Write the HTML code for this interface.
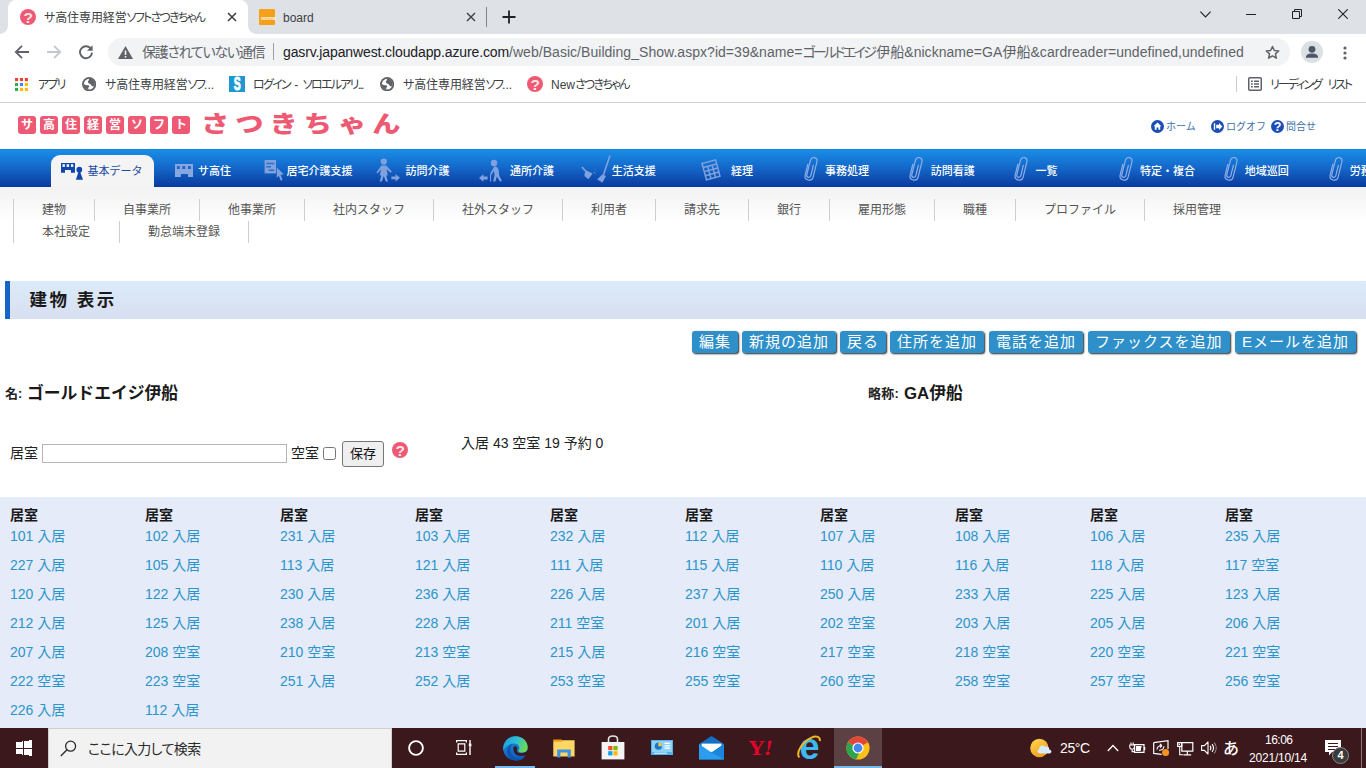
<!DOCTYPE html>
<html lang="ja">
<head>
<meta charset="utf-8">
<title>サ高住専用経営ソフトさつきちゃん</title>
<style>
*{box-sizing:border-box;}
html,body{margin:0;padding:0;}
body{width:1366px;height:768px;overflow:hidden;position:relative;background:#fff;
  font-family:"Liberation Sans","Noto Sans CJK JP",sans-serif;color:#222;}
.abs{position:absolute;white-space:nowrap;}
svg{display:block;}

/* ===== Chrome: tab strip ===== */
#tabstrip{position:absolute;left:0;top:0;width:1366px;height:34px;background:#dee1e6;}
#tab1{position:absolute;left:8px;top:0;width:240px;height:34px;background:#fff;border-radius:8px 8px 0 0;}
#tab1:before,#tab1:after{content:"";position:absolute;bottom:0;width:8px;height:8px;}
#tab1:before{left:-8px;background:radial-gradient(circle at 0 0,transparent 7.5px,#fff 8px);}
#tab1:after{right:-8px;background:radial-gradient(circle at 100% 0,transparent 7.5px,#fff 8px);}
.tabtxt{position:absolute;top:9.5px;font-size:12px;line-height:16px;color:#3c4043;white-space:nowrap;}

/* ===== Chrome: toolbar ===== */
#toolbar{position:absolute;left:0;top:34px;width:1366px;height:34px;background:#fff;}
#omni{position:absolute;left:108px;top:4px;width:1182px;height:28px;border-radius:14px;background:#f1f3f4;}
#url{position:absolute;left:283px;top:9px;font-size:14px;line-height:18px;color:#5f6368;white-space:nowrap;letter-spacing:0.04px;}
#url b{font-weight:normal;color:#202124;letter-spacing:-0.12px;}

/* ===== Chrome: bookmarks ===== */
#bm{position:absolute;left:0;top:68px;width:1366px;height:35px;background:#fff;border-bottom:1px solid #d0d2d5;}
.bmt{position:absolute;top:9.4px;font-size:12px;line-height:16px;color:#3c4043;white-space:nowrap;}

.kj{font-feature-settings:"palt";letter-spacing:-0.1px;}
.kn{font-feature-settings:"palt";letter-spacing:-1.75px;}
#sec{left:142px;top:9px;font-size:14px;line-height:18px;color:#5f6368;font-feature-settings:"palt";letter-spacing:-1.3px;}
.un{font-feature-settings:"palt";letter-spacing:-2.7px;margin-right:2px;}
/* ===== Page ===== */

#page{position:absolute;left:0;top:0;width:1366px;height:728px;background:#fff;overflow:hidden;z-index:0;}
#tabstrip,#toolbar,#bm,#taskbar{z-index:2;}
.lb{position:absolute;top:116px;width:18px;height:18px;border-radius:3px;background:#ee5a73;color:#fff;font-weight:bold;font-size:12px;line-height:18px;text-align:center;}
#logot{position:absolute;left:201px;top:105.5px;font-size:25px;line-height:36px;font-weight:900;color:#ee5a73;letter-spacing:5.3px;white-space:nowrap;transform:scale(1.13,0.93);transform-origin:0 50%;}
.hl{position:absolute;top:120px;font-size:10px;line-height:13px;color:#3d6fa8;white-space:nowrap;}
#nav{position:absolute;left:0;top:149px;width:1366px;height:38px;background:linear-gradient(#0f86e2 0px,#198ce5 1.5px,#1469cb 18px,#0d45a9 33px,#0b3fa5 36px,#0836a0 38px);}
#navtab{position:absolute;left:51px;top:6px;width:103px;height:32px;background:#f4f4f4;border-radius:9px 9px 0 0;}
.nt{position:absolute;top:15px;font-size:11px;line-height:14px;font-weight:500;color:#fff;white-space:nowrap;letter-spacing:0px;}
.nt.act{color:#1b4aa3;font-weight:normal;}
#sub{position:absolute;left:0;top:187px;width:1366px;height:58px;background:linear-gradient(#f2f2f2 0px,#ffffff 34px);}
.si{position:absolute;height:22px;border-left:1px solid #cfcfcf;padding-left:28px;font-size:12px;line-height:22px;color:#555;white-space:nowrap;}
#ttl{position:absolute;left:5px;top:281px;width:1361px;height:38px;border-left:5px solid #1565c8;background:linear-gradient(#dbebf9,#d8dff0);}
#ttl span{position:absolute;left:19.5px;top:6px;font-size:17.5px;line-height:26px;font-weight:bold;color:#1a1a1a;letter-spacing:2.5px;white-space:nowrap;}
.btn{position:absolute;top:331px;height:22px;background:#2f90c9;color:#fff;border-radius:3px;box-shadow:1px 1px 2px #222;font-size:15px;line-height:21px;letter-spacing:1px;padding:0 7px 0 7px;white-space:nowrap;}
.lbl{position:absolute;font-size:13px;font-weight:bold;color:#222;white-space:nowrap;line-height:20px;}
.val{position:absolute;font-size:16.8px;font-weight:bold;color:#1a1a1a;white-space:nowrap;line-height:24px;}
.t14{position:absolute;font-size:14px;line-height:20px;color:#222;white-space:nowrap;}
#grid{position:absolute;left:0;top:497px;width:1366px;height:231px;background:#e5ebf8;}
.gh{position:absolute;top:8px;font-size:14px;line-height:20px;font-weight:bold;color:#1a1a1a;white-space:nowrap;}
.gc{position:absolute;font-size:14px;line-height:20px;color:#2b95cb;white-space:nowrap;}


/* ===== Taskbar ===== */
#taskbar{position:absolute;left:0;top:728px;width:1366px;height:40px;background:#3a181b;}
#srch{font-feature-settings:"palt";letter-spacing:-0.6px;}
</style>
</head>
<body>

<div id="tabstrip">
  <div id="tab1"></div>
  <svg class="abs" style="left:20px;top:9px" width="16" height="16" viewBox="0 0 16 16"><circle cx="8" cy="8" r="8" fill="#ee5a73"/><text x="8.3" y="13.5" font-size="15.5" font-weight="bold" font-family="Liberation Sans,sans-serif" fill="#fce4e9" text-anchor="middle">?</text></svg>
  <span class="tabtxt" style="left:44px"><span class="kj">サ高住専用経営</span><span class="kn" style="letter-spacing:-1.75px">ソフトさつきちゃん</span></span>
  <svg class="abs" style="left:226px;top:11px" width="12" height="12" viewBox="0 0 12 12"><path d="M2 2 L10 10 M10 2 L2 10" stroke="#3c4043" stroke-width="1.6" fill="none"/></svg>
  <div class="abs" style="left:259px;top:9px;width:16px;height:16px;background:#f6a01a;border-radius:1px"></div>
  <span class="abs" style="left:261px;top:15px;font-size:5px;line-height:6px;color:#fff;font-weight:bold;letter-spacing:-0.2px">norma</span>
  <span class="tabtxt" style="left:283px">board</span>
  <svg class="abs" style="left:465px;top:11px" width="12" height="12" viewBox="0 0 12 12"><path d="M2 2 L10 10 M10 2 L2 10" stroke="#3c4043" stroke-width="1.4" fill="none"/></svg>
  <div class="abs" style="left:486px;top:7px;width:1px;height:20px;background:#80868b"></div>
  <svg class="abs" style="left:501px;top:9px" width="16" height="16" viewBox="0 0 16 16"><path d="M8 1.5 V14.5 M1.5 8 H14.5" stroke="#202124" stroke-width="1.8" fill="none"/></svg>
  <svg class="abs" style="left:1199.5px;top:10.8px" width="11" height="7" viewBox="0 0 11 7"><path d="M0.4 0.6 L5.5 6 L10.6 0.6" stroke="#202124" stroke-width="1.1" fill="none"/></svg>
  <div class="abs" style="left:1246px;top:14px;width:10px;height:1px;background:#202124"></div>
  <svg class="abs" style="left:1292px;top:9px" width="10" height="10" viewBox="0 0 10 10"><path d="M0.5 2.5 H7.5 V9.5 H0.5 Z M2.5 2.5 V0.5 H9.5 V7.5 H7.5" stroke="#202124" stroke-width="1" fill="none"/></svg>
  <svg class="abs" style="left:1338px;top:9px" width="10" height="10" viewBox="0 0 10 10"><path d="M0.3 0.3 L9.7 9.7 M9.7 0.3 L0.3 9.7" stroke="#202124" stroke-width="1.1" fill="none"/></svg>
</div>

<div id="toolbar">
  <svg class="abs" style="left:14px;top:10px" width="16" height="16" viewBox="0 0 16 16"><path d="M15 8 H2 M8 1.8 L1.8 8 L8 14.2" stroke="#5f6368" stroke-width="1.8" fill="none"/></svg>
  <svg class="abs" style="left:46px;top:10px" width="16" height="16" viewBox="0 0 16 16"><path d="M1 8 H14 M8 1.8 L14.2 8 L8 14.2" stroke="#c4c7ca" stroke-width="1.8" fill="none"/></svg>
  <svg class="abs" style="left:78px;top:10px" width="16" height="16" viewBox="0 0 16 16"><path d="M13.2 5.2 A6 6 0 1 0 14 8.6" stroke="#5f6368" stroke-width="1.9" fill="none"/><path d="M14.6 1.2 V6.8 H9 Z" fill="#5f6368"/></svg>
  <div id="omni"></div>
  <svg class="abs" style="left:118px;top:11.5px" width="15" height="13" viewBox="0 0 15 13"><path d="M7.5 0 L15 13 H0 Z" fill="#5f6368"/><rect x="6.7" y="4.5" width="1.6" height="4.5" fill="#f1f3f4"/><rect x="6.7" y="10" width="1.6" height="1.6" fill="#f1f3f4"/></svg>
  <span class="abs" id="sec">保護されていない通信</span>
  <div class="abs" style="left:273px;top:9px;width:1px;height:17px;background:#9aa0a6"></div>
  <span id="url"><b>gasrv.japanwest.cloudapp.azure.com</b>/web/Basic/Building_Show.aspx?id=39&amp;name=<span class="un">ゴールドエイジ</span>伊船&amp;nickname=GA伊船&amp;cardreader=undefined,undefined</span>
  <svg class="abs" style="left:1264.5px;top:10.5px" width="15" height="14.2" viewBox="0 0 17 16"><path d="M8.5 1.6 L10.6 6.2 L15.6 6.7 L11.8 10 L12.9 14.9 L8.5 12.3 L4.1 14.9 L5.2 10 L1.4 6.7 L6.4 6.2 Z" stroke="#5f6368" stroke-width="1.7" fill="none" stroke-linejoin="round"/></svg>
  <svg class="abs" style="left:1301px;top:7px" width="22" height="22" viewBox="0 0 22 22"><circle cx="11" cy="11" r="11" fill="#dcdfe4"/><circle cx="11" cy="8.3" r="3.4" fill="#4d5668"/><path d="M4.9 16.8 C4.9 13 8.4 12.5 11 12.5 C13.6 12.5 17.1 13 17.1 16.8 Z" fill="#4d5668"/></svg>
  <svg class="abs" style="left:1342.5px;top:11.6px" width="4" height="14" viewBox="0 0 4 14"><circle cx="2" cy="2" r="1.6" fill="#5f6368"/><circle cx="2" cy="7" r="1.6" fill="#5f6368"/><circle cx="2" cy="12" r="1.6" fill="#5f6368"/></svg>
</div>

<div id="bm">
  <svg class="abs" style="left:15px;top:9.5px" width="13" height="13" viewBox="0 0 14 14"><rect x="0" y="0" width="3.4" height="3.4" fill="#ea4335"/><rect x="5.3" y="0" width="3.4" height="3.4" fill="#ea4335"/><rect x="10.6" y="0" width="3.4" height="3.4" fill="#ea4335"/><rect x="0" y="5.3" width="3.4" height="3.4" fill="#34a853"/><rect x="5.3" y="5.3" width="3.4" height="3.4" fill="#4285f4"/><rect x="10.6" y="5.3" width="3.4" height="3.4" fill="#fbbc05"/><rect x="0" y="10.6" width="3.4" height="3.4" fill="#34a853"/><rect x="5.3" y="10.6" width="3.4" height="3.4" fill="#fbbc05"/><rect x="10.6" y="10.6" width="3.4" height="3.4" fill="#fbbc05"/></svg>
  <span class="bmt" id="bm0" style="left:38px"><span class="kn">アプリ</span></span>
  <svg class="abs" style="left:82px;top:8.8px" width="14.3" height="14.3" viewBox="0 0 14.3 14.3"><circle cx="7.15" cy="7.15" r="7.1" fill="#5f6368"/><circle cx="7.15" cy="7.15" r="5.3" fill="#fff"/><path d="M6.6 1.6 A5.6 5.6 0 0 1 12.7 7.8 C12.2 9.4 11 9.8 10 9 C9.2 8.4 9.4 7.4 8.2 7 C6.6 6.6 5.6 5.8 6 4.6 C6.4 3.6 7.6 3.4 6.6 1.6 Z M1.6 6.9 A5.6 5.6 0 0 0 7.4 12.7 C5.8 11.6 6 10.6 7 10 C7.8 9.4 7 8.4 5.8 8.2 C4.4 8 3 7.8 1.6 6.9 Z" fill="#5f6368"/></svg>
  <span class="bmt" id="bm1" style="left:105px"><span class="kj">サ高住専用経営</span><span class="kn">ソフ</span>...</span>
  <svg class="abs" style="left:229px;top:8px" width="16" height="16" viewBox="0 0 16 16"><rect width="16" height="16" fill="#1e98d2"/><text transform="translate(8.2 14.4) scale(0.58 1)" x="0" y="0" font-size="18" font-weight="bold" font-family="Liberation Sans,sans-serif" fill="#fff" stroke="#fff" stroke-width="0.9" text-anchor="middle">S</text></svg>
  <span class="bmt" id="bm2" style="left:253px;word-spacing:1.2px"><span class="kn">ログイン</span> - <span class="kn">ソロエルアリ...</span></span>
  <svg class="abs" style="left:380px;top:8.8px" width="14.3" height="14.3" viewBox="0 0 14.3 14.3"><circle cx="7.15" cy="7.15" r="7.1" fill="#5f6368"/><circle cx="7.15" cy="7.15" r="5.3" fill="#fff"/><path d="M6.6 1.6 A5.6 5.6 0 0 1 12.7 7.8 C12.2 9.4 11 9.8 10 9 C9.2 8.4 9.4 7.4 8.2 7 C6.6 6.6 5.6 5.8 6 4.6 C6.4 3.6 7.6 3.4 6.6 1.6 Z M1.6 6.9 A5.6 5.6 0 0 0 7.4 12.7 C5.8 11.6 6 10.6 7 10 C7.8 9.4 7 8.4 5.8 8.2 C4.4 8 3 7.8 1.6 6.9 Z" fill="#5f6368"/></svg>
  <span class="bmt" id="bm3" style="left:403px"><span class="kj">サ高住専用経営</span><span class="kn">ソフ</span>...</span>
  <svg class="abs" style="left:527px;top:8px" width="16" height="16" viewBox="0 0 16 16"><circle cx="8" cy="8" r="8" fill="#ee5a73"/><text x="8.3" y="13.5" font-size="15.5" font-weight="bold" font-family="Liberation Sans,sans-serif" fill="#fce4e9" text-anchor="middle">?</text></svg>
  <span class="bmt" id="bm4" style="left:551px">New<span class="kn">さつきちゃん</span></span>
  <div class="abs" style="left:1236px;top:8px;width:1px;height:16px;background:#c8cacd"></div>
  <svg class="abs" style="left:1248px;top:9px" width="14" height="14" viewBox="0 0 14 14"><rect x="0.75" y="0.75" width="12.5" height="12.5" rx="1" fill="none" stroke="#5f6368" stroke-width="1.5"/><path d="M3 4.2 H4.8 M6 4.2 H11 M3 7 H4.8 M6 7 H11 M3 9.8 H4.8 M6 9.8 H11" stroke="#5f6368" stroke-width="1.4"/></svg>
  <span class="bmt" id="bm5" style="left:1270px"><span class="kn" style="letter-spacing:-2px">リーディング</span> &nbsp;<span class="kn" style="letter-spacing:-2.2px">リスト</span></span>
</div>

<div id="page">
  <span class="lb" style="left:18px">サ</span>
  <span class="lb" style="left:40px">高</span>
  <span class="lb" style="left:62px">住</span>
  <span class="lb" style="left:84px">経</span>
  <span class="lb" style="left:106px">営</span>
  <span class="lb" style="left:128px">ソ</span>
  <span class="lb" style="left:150px">フ</span>
  <span class="lb" style="left:172px">ト</span>
  <span id="logot">さつきちゃん</span>
  <svg class="abs" style="left:1151px;top:120px" width="13" height="13" viewBox="0 0 13 13"><circle cx="6.5" cy="6.5" r="6.5" fill="#1a4db5"/><path d="M6.5 2.6 L10.4 6.3 H9.2 V9.8 H7.4 V7.4 H5.6 V9.8 H3.8 V6.3 H2.6 Z" fill="#fff"/></svg>
  <span class="hl" style="left:1166px">ホーム</span>
  <svg class="abs" style="left:1211px;top:120px" width="13" height="13" viewBox="0 0 13 13"><circle cx="6.5" cy="6.5" r="6.5" fill="#1a4db5"/><path d="M2.8 3.2 H4.2 V9.8 H2.8 Z M5.2 4.8 H8 V3 L11.4 6.5 L8 10 V8.2 H5.2 Z" fill="#fff"/></svg>
  <span class="hl" style="left:1226px">ログオフ</span>
  <svg class="abs" style="left:1271px;top:120px" width="13" height="13" viewBox="0 0 13 13"><circle cx="6.5" cy="6.5" r="6.5" fill="#1a4db5"/><text x="6.6" y="11" font-size="12.5" font-weight="bold" font-family="Liberation Sans,sans-serif" fill="#fff" text-anchor="middle">?</text></svg>
  <span class="hl" style="left:1286px">問合せ</span>
  <div id="nav">
    <div id="navtab"></div>
    <span class="nt act" style="left:87.6px">基本データ</span>
    <span class="nt" style="left:198px">サ高住</span>
    <span class="nt" style="left:286.5px">居宅介護支援</span>
    <span class="nt" style="left:405.4px">訪問介護</span>
    <span class="nt" style="left:510px">通所介護</span>
    <span class="nt" style="left:611.8px">生活支援</span>
    <span class="nt" style="left:731px">経理</span>
    <span class="nt" style="left:825px">事務処理</span>
    <span class="nt" style="left:930.7px">訪問看護</span>
    <span class="nt" style="left:1035.5px">一覧</span>
    <span class="nt" style="left:1140px">特定・複合</span>
    <span class="nt" style="left:1244.7px">地域巡回</span>
    <span class="nt" style="left:1349.8px">労務管理</span>
    <svg class="abs" style="left:0;top:0" width="1366" height="38" viewBox="0 0 1366 38">
      <g fill="#1146ad"><path d="M61 13.9 H75 V23.8 H70.9 V21.1 H65 V23.8 H61 Z"/><circle cx="79.3" cy="20.7" r="2.85"/><path d="M78.6 22.4 H80 L83 30.8 H75.9 Z"/></g>
      <g fill="#f4f4f4"><rect x="62.5" y="15.2" width="2.4" height="2.7"/><rect x="66.6" y="15.2" width="2.5" height="2.7"/><rect x="70.9" y="15.2" width="2.4" height="2.7"/></g>
      <path d="M175 15.1 H193 V28 H188 V25 H180.9 V28 H175 Z" fill="#86a7df"/>
      <g fill="#2264c8"><rect x="176.9" y="17.1" width="2.9" height="2.9"/><rect x="182.3" y="17.1" width="2.9" height="2.9"/><rect x="188" y="17.1" width="2.9" height="2.9"/></g>
      <path d="M264.6 11 H276 V24.4 H264.6 Z" fill="#7fa2df"/>
      <path d="M266.4 14.4 H274.2 M266.4 17.8 H271 M268.6 21.2 H274.2" stroke="#2f6fcb" stroke-width="1.5"/>
      <path d="M276.8 18.4 L284 25.4 L280.6 25.8 L282.6 31 L280.8 31.8 L278.8 26.8 L276.8 29 Z" fill="#7fa2df"/>
      <g fill="#7fa2df"><circle cx="383.8" cy="12.6" r="3.1"/><path d="M381.4 16.4 H386.2 L391.8 22.6 L390.6 23.8 L386.6 20.2 L387.8 26.4 H386.2 L388 32.6 H385.8 L383.8 27 L381.8 32.6 H379.6 L381.4 26.4 H379.8 L381 20.2 L377.6 24.4 L376.4 23.4 Z"/><path d="M391.4 27.4 H395.6 V25 L400 28.8 L395.6 32.6 V30.2 H391.4 Z"/></g>
      <g fill="#7fa2df"><path d="M487.6 27.6 H483.4 V25.2 L479 29 L483.4 32.8 V30.4 H487.6 Z"/><circle cx="494" cy="14" r="3.2"/><path d="M494.2 17.6 C497.2 17.6 498.6 19.6 498.8 22.4 L499.2 26.4 L502 32 L500 32.6 L496.8 27.4 L495.4 32.6 H493.2 L494.6 25.8 L494 21.8 L491.6 25.4 L490.2 24.6 Z"/></g>
      <path d="M490.6 25 V32.4" stroke="#7fa2df" stroke-width="1.1"/>
      <g fill="#7fa2df"><path d="M581.4 18.6 L582.6 17.6 L586 21.2 L592.6 24.4 L588.4 30.2 L584.4 27 L585 22.6 Z"/><path d="M602.2 25.6 L606 27 L602.4 33.6 L597.2 30.4 Z"/></g>
      <path d="M610 6.6 L603.4 26" stroke="#7fa2df" stroke-width="1.6"/>
      <path d="M594 23 L595 24.4 M595.4 20.6 L595.8 21.2" stroke="#7fa2df" stroke-width="0.9"/>
      <g transform="rotate(-15 711 20.8)" fill="none" stroke="#7fa2df"><rect x="704" y="12.4" width="14" height="17" stroke-width="1.5"/><path d="M704 16.6 H718 M704 20.8 H718 M704 25 H718 M708.7 16.6 V29.4 M713.3 16.6 V29.4" stroke-width="1.5"/></g>
      <g transform="translate(803.3,7.2) scale(1.08) rotate(14 7 12)" fill="none" stroke="#8db0e8" stroke-width="1.1"><path d="M3.2 8 V18.6 C3.2 23.6 10.8 23.6 10.8 18.6 V4.4 C10.8 -0.4 4.6 -0.4 4.6 4.4 V17.8 C4.6 20.6 8.4 20.6 8.4 17.8 V7.6"/></g><g transform="translate(908.3,7.2) scale(1.08) rotate(14 7 12)" fill="none" stroke="#8db0e8" stroke-width="1.1"><path d="M3.2 8 V18.6 C3.2 23.6 10.8 23.6 10.8 18.6 V4.4 C10.8 -0.4 4.6 -0.4 4.6 4.4 V17.8 C4.6 20.6 8.4 20.6 8.4 17.8 V7.6"/></g><g transform="translate(1013.3,7.2) scale(1.08) rotate(14 7 12)" fill="none" stroke="#8db0e8" stroke-width="1.1"><path d="M3.2 8 V18.6 C3.2 23.6 10.8 23.6 10.8 18.6 V4.4 C10.8 -0.4 4.6 -0.4 4.6 4.4 V17.8 C4.6 20.6 8.4 20.6 8.4 17.8 V7.6"/></g><g transform="translate(1118.3,7.2) scale(1.08) rotate(14 7 12)" fill="none" stroke="#8db0e8" stroke-width="1.1"><path d="M3.2 8 V18.6 C3.2 23.6 10.8 23.6 10.8 18.6 V4.4 C10.8 -0.4 4.6 -0.4 4.6 4.4 V17.8 C4.6 20.6 8.4 20.6 8.4 17.8 V7.6"/></g><g transform="translate(1223.3,7.2) scale(1.08) rotate(14 7 12)" fill="none" stroke="#8db0e8" stroke-width="1.1"><path d="M3.2 8 V18.6 C3.2 23.6 10.8 23.6 10.8 18.6 V4.4 C10.8 -0.4 4.6 -0.4 4.6 4.4 V17.8 C4.6 20.6 8.4 20.6 8.4 17.8 V7.6"/></g><g transform="translate(1328.3,7.2) scale(1.08) rotate(14 7 12)" fill="none" stroke="#8db0e8" stroke-width="1.1"><path d="M3.2 8 V18.6 C3.2 23.6 10.8 23.6 10.8 18.6 V4.4 C10.8 -0.4 4.6 -0.4 4.6 4.4 V17.8 C4.6 20.6 8.4 20.6 8.4 17.8 V7.6"/></g>
    </svg>
  </div>
  <div id="sub">
    <span class="si" style="left:13px;top:12px;width:81px">建物</span>
    <span class="si" style="left:94px;top:12px;width:105px">自事業所</span>
    <span class="si" style="left:199px;top:12px;width:105px">他事業所</span>
    <span class="si" style="left:304px;top:12px;width:129px">社内スタッフ</span>
    <span class="si" style="left:433px;top:12px;width:129px">社外スタッフ</span>
    <span class="si" style="left:562px;top:12px;width:93px">利用者</span>
    <span class="si" style="left:655px;top:12px;width:93px">請求先</span>
    <span class="si" style="left:748px;top:12px;width:81px">銀行</span>
    <span class="si" style="left:829px;top:12px;width:105px">雇用形態</span>
    <span class="si" style="left:934px;top:12px;width:81px">職種</span>
    <span class="si" style="left:1015px;top:12px;width:129px">プロファイル</span>
    <span class="si" style="left:1144px;top:12px;width:105px">採用管理</span>
    <span class="si" style="left:13px;top:34px;width:105px">本社設定</span>
    <span class="si" style="left:119px;top:34px;width:129px">勤怠端末登録</span>
    <span class="si" style="left:248px;top:34px;width:1px"></span>
  </div>
  <div id="ttl"><span>建物 表示</span></div>
  <span class="btn" style="left:692px">編集</span>
  <span class="btn" style="left:742px">新規の追加</span>
  <span class="btn" style="left:840px">戻る</span>
  <span class="btn" style="left:890px">住所を追加</span>
  <span class="btn" style="left:989px">電話を追加</span>
  <span class="btn" style="left:1088px">ファックスを追加</span>
  <span class="btn" style="left:1235px">Eメールを追加</span>
  <span class="lbl" style="left:5px;top:384px">名:</span>
  <span class="val" style="left:27px;top:381.5px">ゴールドエイジ伊船</span>
  <span class="lbl" style="left:868px;top:384px;letter-spacing:0.3px">略称:</span>
  <span class="val" style="left:904px;top:381.5px">GA伊船</span>
  <span class="t14" style="left:10px;top:443px">居室</span>
  <div class="abs" style="left:42px;top:444px;width:245px;height:19px;border:1px solid #b5b5b5;background:#fff"></div>
  <span class="t14" style="left:291px;top:443px">空室</span>
  <div class="abs" style="left:323px;top:447px;width:13px;height:13px;border:1px solid #767676;border-radius:2.5px;background:#fff"></div>
  <div class="abs" style="left:342px;top:441px;width:42px;height:26px;border:1px solid #767676;border-radius:3px;background:#efefef;font-size:13px;line-height:24px;text-align:center;color:#111">保存</div>
  <svg class="abs" style="left:392px;top:442px" width="16" height="16" viewBox="0 0 16 16"><circle cx="8" cy="8" r="8" fill="#ee5a73"/><text x="8.3" y="13.5" font-size="15.5" font-weight="bold" font-family="Liberation Sans,sans-serif" fill="#fce4e9" text-anchor="middle">?</text></svg>
  <span class="t14" style="left:461px;top:433px">入居 43 空室 19 予約 0</span>
  <div id="grid">
    <span class="gh" style="left:10px">居室</span>
    <span class="gc" style="left:10px;top:29px">101 入居</span>
    <span class="gc" style="left:10px;top:58px">227 入居</span>
    <span class="gc" style="left:10px;top:87px">120 入居</span>
    <span class="gc" style="left:10px;top:116px">212 入居</span>
    <span class="gc" style="left:10px;top:145px">207 入居</span>
    <span class="gc" style="left:10px;top:174px">222 空室</span>
    <span class="gc" style="left:10px;top:203px">226 入居</span>
    <span class="gh" style="left:145px">居室</span>
    <span class="gc" style="left:145px;top:29px">102 入居</span>
    <span class="gc" style="left:145px;top:58px">105 入居</span>
    <span class="gc" style="left:145px;top:87px">122 入居</span>
    <span class="gc" style="left:145px;top:116px">125 入居</span>
    <span class="gc" style="left:145px;top:145px">208 空室</span>
    <span class="gc" style="left:145px;top:174px">223 空室</span>
    <span class="gc" style="left:145px;top:203px">112 入居</span>
    <span class="gh" style="left:280px">居室</span>
    <span class="gc" style="left:280px;top:29px">231 入居</span>
    <span class="gc" style="left:280px;top:58px">113 入居</span>
    <span class="gc" style="left:280px;top:87px">230 入居</span>
    <span class="gc" style="left:280px;top:116px">238 入居</span>
    <span class="gc" style="left:280px;top:145px">210 空室</span>
    <span class="gc" style="left:280px;top:174px">251 入居</span>
    <span class="gh" style="left:415px">居室</span>
    <span class="gc" style="left:415px;top:29px">103 入居</span>
    <span class="gc" style="left:415px;top:58px">121 入居</span>
    <span class="gc" style="left:415px;top:87px">236 入居</span>
    <span class="gc" style="left:415px;top:116px">228 入居</span>
    <span class="gc" style="left:415px;top:145px">213 空室</span>
    <span class="gc" style="left:415px;top:174px">252 入居</span>
    <span class="gh" style="left:550px">居室</span>
    <span class="gc" style="left:550px;top:29px">232 入居</span>
    <span class="gc" style="left:550px;top:58px">111 入居</span>
    <span class="gc" style="left:550px;top:87px">226 入居</span>
    <span class="gc" style="left:550px;top:116px">211 空室</span>
    <span class="gc" style="left:550px;top:145px">215 入居</span>
    <span class="gc" style="left:550px;top:174px">253 空室</span>
    <span class="gh" style="left:685px">居室</span>
    <span class="gc" style="left:685px;top:29px">112 入居</span>
    <span class="gc" style="left:685px;top:58px">115 入居</span>
    <span class="gc" style="left:685px;top:87px">237 入居</span>
    <span class="gc" style="left:685px;top:116px">201 入居</span>
    <span class="gc" style="left:685px;top:145px">216 空室</span>
    <span class="gc" style="left:685px;top:174px">255 空室</span>
    <span class="gh" style="left:820px">居室</span>
    <span class="gc" style="left:820px;top:29px">107 入居</span>
    <span class="gc" style="left:820px;top:58px">110 入居</span>
    <span class="gc" style="left:820px;top:87px">250 入居</span>
    <span class="gc" style="left:820px;top:116px">202 空室</span>
    <span class="gc" style="left:820px;top:145px">217 空室</span>
    <span class="gc" style="left:820px;top:174px">260 空室</span>
    <span class="gh" style="left:955px">居室</span>
    <span class="gc" style="left:955px;top:29px">108 入居</span>
    <span class="gc" style="left:955px;top:58px">116 入居</span>
    <span class="gc" style="left:955px;top:87px">233 入居</span>
    <span class="gc" style="left:955px;top:116px">203 入居</span>
    <span class="gc" style="left:955px;top:145px">218 空室</span>
    <span class="gc" style="left:955px;top:174px">258 空室</span>
    <span class="gh" style="left:1090px">居室</span>
    <span class="gc" style="left:1090px;top:29px">106 入居</span>
    <span class="gc" style="left:1090px;top:58px">118 入居</span>
    <span class="gc" style="left:1090px;top:87px">225 入居</span>
    <span class="gc" style="left:1090px;top:116px">205 入居</span>
    <span class="gc" style="left:1090px;top:145px">220 空室</span>
    <span class="gc" style="left:1090px;top:174px">257 空室</span>
    <span class="gh" style="left:1225px">居室</span>
    <span class="gc" style="left:1225px;top:29px">235 入居</span>
    <span class="gc" style="left:1225px;top:58px">117 空室</span>
    <span class="gc" style="left:1225px;top:87px">123 入居</span>
    <span class="gc" style="left:1225px;top:116px">206 入居</span>
    <span class="gc" style="left:1225px;top:145px">221 空室</span>
    <span class="gc" style="left:1225px;top:174px">256 空室</span>
  </div>
</div>

<div id="taskbar">
  <svg class="abs" style="left:16px;top:12px" width="16" height="16" viewBox="0 0 16 16"><path d="M0 2.3 L6.5 1.4 V7.5 H0 Z M7.5 1.3 L16 0 V7.5 H7.5 Z M0 8.5 H6.5 V14.6 L0 13.7 Z M7.5 8.5 H16 V16 L7.5 14.7 Z" fill="#fff" shape-rendering="crispEdges"/></svg>
  <div class="abs" style="left:48px;top:0;width:344px;height:40px;background:#f2f2f2;border:1px solid #cfcfcf;border-bottom:none"></div>
  <svg class="abs" style="left:60px;top:11.8px" width="17" height="17" viewBox="0 0 17 17"><circle cx="10.6" cy="6.2" r="5" stroke="#2b2b2b" stroke-width="1.3" fill="none"/><path d="M7 9.8 L0.8 16" stroke="#2b2b2b" stroke-width="1.4"/></svg>
  <span class="abs" id="srch" style="left:88px;top:10.7px;font-size:14px;line-height:20px;color:#2b2b2b">ここに入力して検索</span>
  <svg class="abs" style="left:407px;top:11px" width="18" height="18" viewBox="0 0 18 18"><circle cx="9" cy="9" r="6.9" stroke="#fff" stroke-width="1.9" fill="none"/></svg>
  <svg class="abs" style="left:456px;top:12px" width="17" height="15" viewBox="0 0 17 15"><path d="M0.6 2.4 V0.7 H10.4 V2.4 M0.6 12.6 V14.3 H10.4 V12.6 M2.2 3.8 H8.8 V11.2 H2.2 Z" stroke="#fff" stroke-width="1.2" fill="none"/><path d="M14 0 V4.5 M14 7 V15" stroke="#fff" stroke-width="1.4"/><rect x="12.8" y="3.6" width="2.6" height="3" fill="#fff"/></svg>
  <svg class="abs" style="left:503px;top:7.6px" width="25" height="25" viewBox="0 0 25 25"><defs><linearGradient id="eg1" x1="0" y1="0.2" x2="1" y2="0.6"><stop offset="0" stop-color="#1b9de2"/><stop offset="0.5" stop-color="#2fc0d0"/><stop offset="1" stop-color="#6fdc4e"/></linearGradient><linearGradient id="eg2" x1="0" y1="0" x2="0.3" y2="1"><stop offset="0" stop-color="#1d8fe0"/><stop offset="1" stop-color="#0f5fc0"/></linearGradient></defs><circle cx="12.4" cy="12.4" r="12.2" fill="url(#eg2)"/><path d="M7.4 13 C7.4 18 11 22.4 16.4 22.4 C19 22.4 21 21.6 22.6 20.2 C20.6 23 17.2 24.7 13.4 24.6 C7.4 24.4 4 20 4 15.4 C4 11.6 6.4 8.8 9.6 7.8 C8 9.2 7.4 11 7.4 13 Z" fill="#0f55ad"/><path d="M0.3 11 C1.2 4.6 6.6 0.2 12.6 0.2 C19.8 0.2 24.7 5.4 24.7 11.2 C24.7 14.8 22.2 16.6 19 16.6 C16.4 16.6 15 15.6 15.6 14.2 C16.2 13 16.6 12.2 16.2 10.8 C15.6 8.6 13.6 7.4 11.2 7.4 C6.6 7.4 2 10.4 0.3 14.4 Z" fill="url(#eg1)"/><path d="M10.4 12.2 C10.4 10.2 13.2 9.6 13.9 11.6 C14.4 13.2 13.2 14.6 14.2 16 C15.8 17.8 20.6 17.6 23.8 15.2 L25.4 15 L24.6 18.4 L22.6 19 C19.4 20.4 15 20 12.8 18.2 C10.9 16.6 10.4 14.2 10.4 12.2 Z" fill="#3a181b"/></svg>
  <svg class="abs" style="left:553px;top:10.8px" width="22" height="19" viewBox="0 0 22 19"><path d="M0.3 0.4 H8.6 L9.6 1.4 V3.2 H0.3 Z" fill="#e7a213"/><path d="M0.3 2.8 L8.4 2.8 L9.8 1.2 H21.6 V17.4 H0.3 Z" fill="#fdd663"/><path d="M4.2 18.4 V10.4 H17.8 V18.4 H14.6 V13.6 H7.4 V18.4 Z" fill="#3a95e4"/></svg>
  <svg class="abs" style="left:601px;top:7px" width="24" height="25" viewBox="0 0 24 25"><path d="M7.5 7 V4.2 C7.5 2.6 8.8 1 12 1 C15.2 1 16.5 2.6 16.5 4.2 V7" stroke="#e6e6e6" stroke-width="1.6" fill="none"/><path d="M0.6 7 H23.4 V24.4 H0.6 Z" fill="#f4f4f4"/><rect x="7.2" y="11" width="4.2" height="4.2" fill="#f25022"/><rect x="12.4" y="11" width="4.2" height="4.2" fill="#7fba00"/><rect x="7.2" y="16.2" width="4.2" height="4.2" fill="#00a4ef"/><rect x="12.4" y="16.2" width="4.2" height="4.2" fill="#ffb900"/></svg>
  <svg class="abs" style="left:651px;top:12px" width="22" height="15" viewBox="0 0 22 15"><rect width="22" height="15" fill="#4fb3f0"/><rect x="1" y="1" width="20" height="11" fill="#8fd2f8"/><circle cx="7.4" cy="6.2" r="3.6" fill="#1b78c8"/><path d="M7.4 6.2 V2.6 A3.6 3.6 0 0 1 11 6.2 Z" fill="#ffc83d"/><path d="M13.5 3.4 H19 M13.5 5.8 H19 M13.5 8.2 H19" stroke="#fff" stroke-width="1.3"/><path d="M3 13.2 H16" stroke="#e8f6ff" stroke-width="1"/></svg>
  <svg class="abs" style="left:699px;top:8px" width="25" height="24" viewBox="0 0 25 24"><path d="M0 8 L12.5 0 L25 8 V23.4 H0 Z" fill="#1470c4"/><path d="M2.6 7.6 H22.4 V16 H2.6 Z" fill="#fff"/><path d="M0 8 L12.5 16.6 L25 8 V23.4 H0 Z" fill="#2a9df0"/><path d="M12.5 16.6 L25 23.4 V8 Z" fill="#1b84dc"/></svg>
  <svg class="abs" style="left:797px;top:7px" width="24" height="25" viewBox="0 0 24 25"><text x="12.6" y="23.6" font-size="36" font-weight="bold" font-family="Liberation Sans,sans-serif" fill="#3db9f3" text-anchor="middle">e</text><path d="M2.2 22.5 C-1.5 17 6 6.5 14 2.8 C19.5 0.4 23.4 1.8 22.8 6" stroke="#f2b91c" stroke-width="2" fill="none"/></svg>
  <div class="abs" style="left:834px;top:0;width:48px;height:40px;background:#5b4143"></div>
  <svg class="abs" style="left:846px;top:8px" width="24" height="24" viewBox="0 0 24 24"><circle cx="12" cy="12" r="11.6" fill="#fbc116"/><path d="M12 12 L1.95 6.2 A11.6 11.6 0 0 1 22.05 6.2 Z" fill="#e2453a"/><path d="M12 12 L1.95 6.2 A11.6 11.6 0 0 0 10.2 23.45 L14.6 13.5 Z" fill="#2da44e"/><path d="M1.95 6.2 L22.05 6.2 L12 7 Z" fill="#e2453a"/><circle cx="12" cy="12" r="5.6" fill="#fff"/><circle cx="12" cy="12" r="4.4" fill="#4688f1"/></svg>
  <svg class="abs" style="left:1030px;top:10px" width="22" height="20" viewBox="0 0 22 20"><defs><linearGradient id="sun" x1="0" y1="0" x2="0.6" y2="1"><stop offset="0" stop-color="#ffdc55"/><stop offset="1" stop-color="#f59a1b"/></linearGradient></defs><circle cx="9.4" cy="10" r="9.2" fill="url(#sun)"/><path d="M10 15.6 C7 15.6 6.4 12 9 11.4 C9 7.6 13.4 6.2 15.4 9 C17.4 7.8 19.6 9.4 19.2 11.4 C22 11.4 22.2 15.6 19.4 15.6 Z" fill="#d6ecfb"/></svg>
  <svg class="abs" style="left:1129px;top:14px" width="17" height="12" viewBox="0 0 17 12"><path d="M5.6 2.6 H15 V10.4 H5.6 Z" stroke="#fff" stroke-width="1.2" fill="none"/><path d="M15.6 5 V8" stroke="#fff" stroke-width="1.4"/><path d="M7 4 H12.6 L11.6 9 H7 Z" fill="#fff"/><path d="M2 0.5 V3 M4.2 0.5 V3 M0.8 3 H5.4 V5 C5.4 6.6 4.4 7.2 3.1 7.2 C1.8 7.2 0.8 6.6 0.8 5 Z M3.1 7.2 V9.6 H5.6" stroke="#fff" stroke-width="1.1" fill="none"/></svg>
  <svg class="abs" style="left:1153px;top:12px" width="17" height="16" viewBox="0 0 17 16"><path d="M0.7 2.6 L15 0.7 V9 M0.7 2.6 V13.4 L8.6 14.4" stroke="#fff" stroke-width="1.2" fill="none"/><path d="M4 9.6 C4 6.6 6.4 5.4 9 5.6 M9 5.6 L7 4 M9 5.6 L7.2 7.6 M11 6.2 C11 9 8.6 10.4 6 10.2" stroke="#fff" stroke-width="1.1" fill="none"/><circle cx="12.6" cy="12.4" r="3.5" fill="#f7941d"/></svg>
  <svg class="abs" style="left:1177px;top:14px" width="17" height="14" viewBox="0 0 17 14"><path d="M4.8 0.7 H15.8 V9.2 H4.8 Z M10.3 9.2 V12.6 M6.4 12.8 H14.2" stroke="#fff" stroke-width="1.2" fill="none"/><path d="M0.6 0.6 H4.8 V4.4 H0.6 Z M2.7 4.4 V12.8 H6" stroke="#fff" stroke-width="1.1" fill="none"/><rect x="1.6" y="1.6" width="1.4" height="1.4" fill="#fff"/></svg>
  <svg class="abs" style="left:1201px;top:13px" width="16" height="14" viewBox="0 0 16 14"><path d="M0.6 4.6 H3.4 L7 1 V13 L3.4 9.4 H0.6 Z" stroke="#fff" stroke-width="1.1" fill="none" stroke-linejoin="round"/><path d="M9 4.8 C10 6 10 8 9 9.2 M11 3.2 C12.8 5.4 12.8 8.6 11 10.8" stroke="#fff" stroke-width="1.1" fill="none"/><path d="M13.2 1.6 C15.8 4.8 15.8 9.2 13.2 12.4" stroke="#a08e8f" stroke-width="1.1" fill="none"/></svg>
  <div class="abs" style="left:495px;top:38px;width:40px;height:2px;background:#76b9ed"></div>
  <div class="abs" style="left:834px;top:38px;width:48px;height:2px;background:#76b9ed"></div>
  <span class="abs" style="left:748px;top:8px;font-family:'Liberation Serif',serif;font-weight:bold;font-size:21px;line-height:24px;color:#e6002d;letter-spacing:-1px;transform:scaleX(1.12);transform-origin:0 0">Y<i>!</i></span>
  <span class="abs" id="temp" style="left:1060px;top:11px;font-size:14px;line-height:18px;color:#fff;letter-spacing:-0.4px">25°C</span>
  <svg class="abs" style="left:1107px;top:16px" width="12" height="8" viewBox="0 0 12 8"><path d="M0.8 7 L6 1.5 L11.2 7" stroke="#fff" stroke-width="1.3" fill="none"/></svg>
  <span class="abs" style="left:1223px;top:10px;font-size:16px;line-height:22px;color:#fff;font-weight:500">あ</span>
  <span class="abs" id="clk" style="left:1265px;top:3.7px;font-size:12px;line-height:16px;color:#fff;letter-spacing:-0.5px">16:06</span>
  <span class="abs" id="dat" style="left:1249px;top:21.7px;font-size:12px;line-height:16px;color:#fff;letter-spacing:-0.2px">2021/10/14</span>
  <svg class="abs" style="left:1325px;top:12px" width="17" height="17" viewBox="0 0 17 17"><path d="M0 0 H16 V12 H7 L4 15.5 V12 H0 Z" fill="#fff"/><path d="M3 3.5 H13 M3 6.5 H13 M3 9.5 H13" stroke="#3a181b" stroke-width="1"/></svg>
  <div class="abs" style="left:1332px;top:19px;width:17px;height:17px;border-radius:50%;background:#3b3b3b;border:1px solid #8a8a8a;color:#fff;font-size:11px;line-height:15px;text-align:center;font-weight:bold">4</div>
  <div class="abs" style="left:1361px;top:0;width:1px;height:40px;background:#8a7778"></div>
</div>

</body>
</html>
